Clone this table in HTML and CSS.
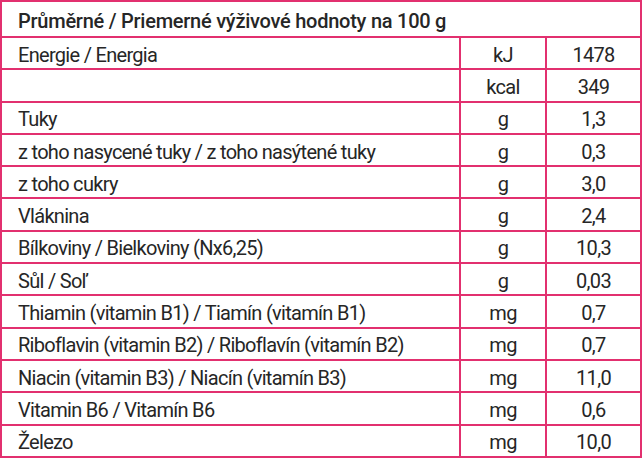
FILE: index.html
```html
<!DOCTYPE html>
<html lang="cs">
<head>
<meta charset="utf-8">
<title>Výživové hodnoty</title>
<link rel="stylesheet" href="styles.css">
</head>
<body>
<div class="table">
  <div class="head">Průměrné / Priemerné výživové hodnoty na 100 g</div>
  <div class="row"><div class="c name">Energie / Energia</div><div class="c unit">kJ</div><div class="c val">1478</div></div>
  <div class="row"><div class="c name"></div><div class="c unit">kcal</div><div class="c val">349</div></div>
  <div class="row"><div class="c name">Tuky</div><div class="c unit">g</div><div class="c val">1,3</div></div>
  <div class="row"><div class="c name">z toho nasycené tuky / z toho nasýtené tuky</div><div class="c unit">g</div><div class="c val">0,3</div></div>
  <div class="row"><div class="c name">z toho cukry</div><div class="c unit">g</div><div class="c val">3,0</div></div>
  <div class="row"><div class="c name">Vláknina</div><div class="c unit">g</div><div class="c val">2,4</div></div>
  <div class="row"><div class="c name">Bílkoviny / Bielkoviny (Nx6,25)</div><div class="c unit">g</div><div class="c val">10,3</div></div>
  <div class="row"><div class="c name">Sůl / Soľ</div><div class="c unit">g</div><div class="c val">0,03</div></div>
  <div class="row"><div class="c name">Thiamin (vitamin B1) / Tiamín (vitamín B1)</div><div class="c unit">mg</div><div class="c val">0,7</div></div>
  <div class="row"><div class="c name">Riboflavin (vitamin B2) / Riboflavín (vitamín B2)</div><div class="c unit">mg</div><div class="c val">0,7</div></div>
  <div class="row"><div class="c name">Niacin (vitamin B3) / Niacín (vitamín B3)</div><div class="c unit">mg</div><div class="c val">11,0</div></div>
  <div class="row"><div class="c name">Vitamin B6 / Vitamín B6</div><div class="c unit">mg</div><div class="c val">0,6</div></div>
  <div class="row"><div class="c name">Železo</div><div class="c unit">mg</div><div class="c val">10,0</div></div>
</div>
</body>
</html>
```
FILE: styles.css
```css
html, body {
  margin: 0;
  padding: 0;
  background: #ffffff;
}
body {
  font-family: Roboto, "Liberation Sans", sans-serif;
  color: #262626;
}
.table {
  width: 642px;
  box-sizing: border-box;
  border: 2px solid #e2306f;
}
.head {
  height: 36px;
  box-sizing: border-box;
  padding: 4px 0 0 16px;
  display: flex;
  align-items: center;
  font-size: 20px;
  font-weight: 500;
  letter-spacing: -0.25px;
  border-bottom: 2px solid #e2306f;
}
.row {
  display: grid;
  grid-template-columns: 457px 84px 1fr;
  height: 32.3px;
  box-sizing: border-box;
  border-bottom: 2px solid #e2306f;
}
.row:last-child {
  border-bottom: none;
  height: 30.3px;
}
.c {
  display: flex;
  align-items: center;
  padding-top: 3px;
  box-sizing: border-box;
  font-size: 20px;
  letter-spacing: -0.7px;
  white-space: nowrap;
}
.name {
  padding-left: 16px;
  border-right: 2px solid #e2306f;
  width: 459px;
}
.unit {
  justify-content: center;
  border-right: 2px solid #e2306f;
  width: 86px;
  margin-left: 2px;
}
.val {
  justify-content: center;
  margin-left: 4px;
}
```
